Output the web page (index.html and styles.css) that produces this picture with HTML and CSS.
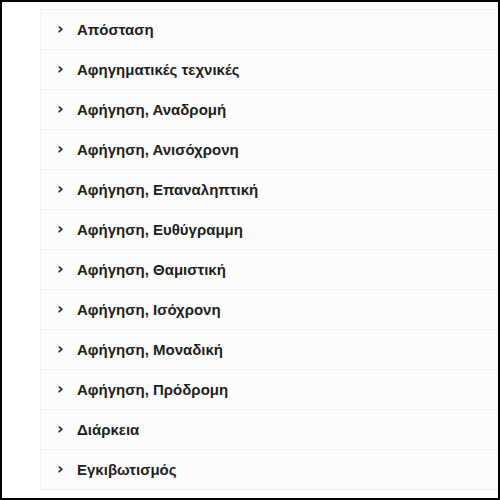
FILE: index.html
```html
<!DOCTYPE html>
<html lang="el">
<head>
    <meta charset="UTF-8">
    <meta name="viewport" content="width=device-width, initial-scale=1.0">
    <title>Λεξικό όρων</title>
    <link rel="stylesheet" href="styles.css">
</head>
<body>
    <div class="frame">
        <ul class="terms">
            <li class="term"><span class="chevron">&#x203A;</span>Απόσταση</li>
            <li class="term"><span class="chevron">&#x203A;</span>Αφηγηματικές τεχνικές</li>
            <li class="term"><span class="chevron">&#x203A;</span>Αφήγηση, Αναδρομή</li>
            <li class="term"><span class="chevron">&#x203A;</span>Αφήγηση, Ανισόχρονη</li>
            <li class="term"><span class="chevron">&#x203A;</span>Αφήγηση, Επαναληπτική</li>
            <li class="term"><span class="chevron">&#x203A;</span>Αφήγηση, Ευθύγραμμη</li>
            <li class="term"><span class="chevron">&#x203A;</span>Αφήγηση, Θαμιστική</li>
            <li class="term"><span class="chevron">&#x203A;</span>Αφήγηση, Ισόχρονη</li>
            <li class="term"><span class="chevron">&#x203A;</span>Αφήγηση, Μοναδική</li>
            <li class="term"><span class="chevron">&#x203A;</span>Αφήγηση, Πρόδρομη</li>
            <li class="term"><span class="chevron">&#x203A;</span>Διάρκεια</li>
            <li class="term"><span class="chevron">&#x203A;</span>Εγκιβωτισμός</li>
        </ul>
    </div>
</body>
</html>
```

FILE: styles.css
```css
body {
    margin: 0;
    font-family: "Liberation Sans", Arial, sans-serif;
    background-color: #fff;
}
.frame {
    box-sizing: border-box;
    width: 500px;
    height: 500px;
    border: 2px solid #000;
    padding: 7px 0 0 38px;
    overflow: hidden;
}
.terms {
    list-style: none;
    margin: 0;
    padding: 0;
    background-color: #fcfcfc;
    border-left: 1px solid #f3f3f3;
    border-top: 1px solid #f3f3f3;
}
.term {
    display: flex;
    align-items: center;
    height: 39px;
    padding-left: 16px;
    border-bottom: 1px solid #f0f0f0;
    font-size: 15px;
    font-weight: bold;
    color: #1e1e1e;
}
.chevron {
    width: 20px;
    font-family: "DejaVu Sans", sans-serif;
    font-size: 16px;
    line-height: 1;
    margin-top: -2px;
}
```
